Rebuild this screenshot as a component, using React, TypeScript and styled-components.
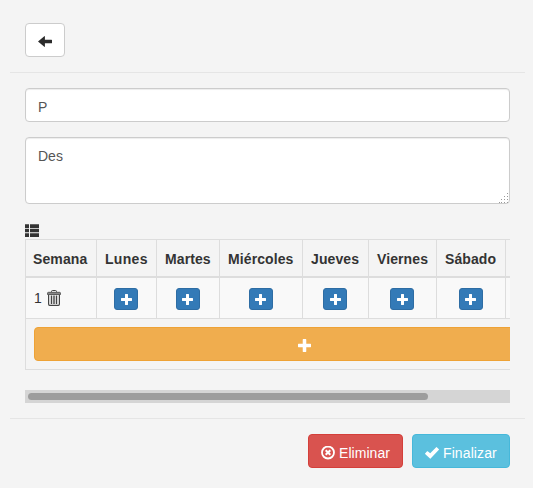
import React from "react";
import styled, { createGlobalStyle } from "styled-components";

const Global = createGlobalStyle`
  * { box-sizing: border-box; }
  html, body { margin: 0; background: #f4f4f4; overflow: hidden; }
  body { font: 14px/20px "Liberation Sans", Arial, sans-serif; color: #333; }
`;

const Page = styled.main`
  width: 533px;
  height: 488px;
  padding: 8px 8px 0 10px;
  overflow: hidden;
`;

const Header = styled.header`
  padding: 15px;
  height: 65px;
  border-bottom: 1px solid #e5e5e5;
`;

const Body = styled.section`
  height: 346px;
  padding: 15px;
  border-bottom: 1px solid #e5e5e5;
`;

const Footer = styled.footer`
  display: flex;
  justify-content: flex-end;
  gap: 9px;
  padding: 15px;
`;

const Icon = styled.svg`
  display: block;
  flex: none;
`;

const tones = {
  plain: ["#fff", "#ccc", "#333"],
  primary: ["#337ab7", "#2e6da4", "#fff"],
  warning: ["#f0ad4e", "#eea236", "#fff"],
  danger: ["#d9534f", "#d43f3a", "#fff"],
  info: ["#5bc0de", "#46b8da", "#fff"],
};

const Button = styled.button<{ $tone: keyof typeof tones; $width: number }>`
  display: flex;
  align-items: center;
  width: ${(p) => p.$width}px;
  height: 34px;
  padding: 3px 12px 0;
  font: inherit;
  border-radius: 4px;
  background: ${(p) => tones[p.$tone][0]};
  border: 1px solid ${(p) => tones[p.$tone][1]};
  color: ${(p) => tones[p.$tone][2]};
`;

const SmallButton = styled(Button)`
  height: 22px;
  margin: 0 auto;
  padding: 0;
  justify-content: center;
  border-radius: 3px;
`;

const WideButton = styled(Button)`
  justify-content: center;
  padding: 3px 0 0;
`;

const ButtonText = styled.span<{ $spacing: number }>`
  margin-left: 4px;
  white-space: nowrap;
  letter-spacing: ${(p) => p.$spacing}px;
`;

const Input = styled.input`
  display: block;
  width: 485px;
  height: 34px;
  padding: 9px 12px 5px;
  border: 1px solid #ccc;
  border-radius: 4px;
  background: #fff;
  box-shadow: inset 0 1px 1px rgba(0, 0, 0, 0.075);
  font: inherit;
  color: #555;
`;

const AreaWrap = styled.div`
  position: relative;
  margin-top: 15px;
`;

const Area = styled.textarea`
  display: block;
  width: 485px;
  height: 67px;
  padding: 8px 12px;
  border: 1px solid #ccc;
  border-radius: 4px;
  background: #fff;
  box-shadow: inset 0 1px 1px rgba(0, 0, 0, 0.075);
  font: inherit;
  color: #555;
  resize: none;
`;

const Grip = styled.svg`
  position: absolute;
  right: 1px;
  bottom: 1px;
`;

const ListMark = styled.div`
  height: 15px;
  margin-top: 20px;
`;

const Scroller = styled.div`
  width: 485px;
  height: 151px;
  overflow: hidden;
`;

const Table = styled.table`
  width: 560px;
  table-layout: fixed;
  border-spacing: 0;
  border-top: 1px solid #ddd;
  border-right: 1px solid #ddd;
`;

const Th = styled.th<{ $spacing: number }>`
  height: 38px;
  padding: 1px 0 0 8px;
  border-left: 1px solid #ddd;
  border-bottom: 2px solid #ddd;
  text-align: left;
  white-space: nowrap;
  letter-spacing: ${(p) => p.$spacing}px;

  &:first-child {
    padding-left: 7px;
  }
`;

const Td = styled.td`
  height: 41px;
  padding: 2px 1px 0 0;
  border-left: 1px solid #ddd;
  border-bottom: 1px solid #ddd;
  background: #f9f9f9;
`;

const AddCell = styled.td`
  height: 51px;
  padding: 8px;
  border-left: 1px solid #ddd;
  border-bottom: 1px solid #ddd;
`;

const Week = styled.div`
  display: flex;
  align-items: center;
  gap: 5px;
  padding: 0 0 2px 8px;
`;

const ScrollBar = styled.div`
  width: 485px;
  height: 13px;
  padding: 3px;
  background: #d5d5d5;
`;

const Thumb = styled.div`
  width: 400px;
  height: 7px;
  border-radius: 4px;
  background: #9d9d9d;
`;

const days = [
  { name: "Semana", width: 71, spacing: 0.12 },
  { name: "Lunes", width: 60, spacing: 0.3 },
  { name: "Martes", width: 63, spacing: 0.1 },
  { name: "Miércoles", width: 83, spacing: 0.1 },
  { name: "Jueves", width: 66, spacing: 0.1 },
  { name: "Viernes", width: 68, spacing: 0.1 },
  { name: "Sábado", width: 69, spacing: 0.1 },
  { name: "Domingo", width: 79, spacing: 0.1 },
];

const ArrowLeft = () => (
  <Icon width="14" height="12" viewBox="0 0 14 12">
    <path d="M0 5.5 6.3.2q.6-.4.6.3V3.8h6.6q.5 0 .5.5v2.4q0 .5-.5.5H6.9v3.3q0 .7-.6.3Z" fill="#2b2b2b" />
  </Icon>
);

const ListIcon = () => (
  <Icon width="14" height="13" viewBox="0 0 14 13" fill="#333">
    <path d="M0 .3h4V4H0ZM5 .3h9V4H5ZM0 4.8h4v3.5H0ZM5 4.8h9v3.5H5ZM0 9.3h4V13H0ZM5 9.3h9V13H5Z" />
  </Icon>
);

const Plus = ({ size }: { size: number }) => (
  <Icon width={size} height={size} viewBox="0 0 11 11" fill="#fff">
    <path d="M4 .4Q4 0 4.4 0h2.2Q7 0 7 .4V4h3.6q.4 0 .4.4v2.2q0 .4-.4.4H7v3.6q0 .4-.4.4H4.4q-.4 0-.4-.4V7H.4Q0 7 0 6.6V4.4Q0 4 .4 4H4Z" />
  </Icon>
);

const Trash = () => (
  <Icon width="14" height="16" viewBox="0 0 14 16" fill="none" stroke="#444">
    <path d="M4.5 2v-.5q0-1 1-1h3q1 0 1 1V2" />
    <path d="M.5 4.5V3.3q0-1 1-1h11q1 0 1 1v1.2Z" fill="#888" strokeWidth=".8" />
    <path d="M1.6 5v9q0 1.3 1 1.3h8.8q1 0 1-1.3V5" strokeWidth="1.2" />
    <path d="M4.5 5.5v8.5M7 5.5v8.5M9.5 5.5v8.5" strokeWidth="1.4" />
  </Icon>
);

const RemoveCircle = () => (
  <Icon width="14" height="14" viewBox="0 0 14 14" fill="none" stroke="#fff">
    <circle cx="7" cy="6.5" r="6" strokeWidth="1.8" />
    <path d="m4.7 4.2 4.6 4.6m0-4.6L4.7 8.8" strokeWidth="2" />
  </Icon>
);

const Check = () => (
  <Icon width="14" height="12" viewBox="0 0 14 12" fill="#fff">
    <path d="M.1 6.5 2.1 4.3q.3-.3.6 0l2.5 2L11.2.2q.3-.3.6 0l2.1 2q.3.3 0 .6l-8.3 8.8q-.3.4-.6 0L.1 7.1q-.3-.3 0-.6Z" />
  </Icon>
);

export default function App() {
  return (
    <>
      <Global />
      <Page>
        <Header>
          <Button $tone="plain" $width={40} aria-label="Volver"><ArrowLeft /></Button>
        </Header>
        <Body>
          <Input defaultValue="P" />
          <AreaWrap>
            <Area defaultValue="Des" />
            <Grip width="10" height="10" viewBox="0 0 10 10" fill="#999">
              <path d="M8 0h1v1H8zM5 3h1v1H5zM8 3h1v1H8zM2 6h1v1H2zM5 6h1v1H5zM8 6h1v1H8zM0 9h1v1H0zM2 9h1v1H2zM5 9h1v1H5zM8 9h1v1H8z" />
            </Grip>
          </AreaWrap>
          <ListMark><ListIcon /></ListMark>
          <Scroller>
            <Table>
              <colgroup>
                {days.map((d) => <col key={d.name} width={d.width} />)}
              </colgroup>
              <thead>
                <tr>{days.map((d) => <Th key={d.name} $spacing={d.spacing}>{d.name}</Th>)}</tr>
              </thead>
              <tbody>
                <tr>
                  <Td><Week>1 <Trash /></Week></Td>
                  {days.slice(1).map((d) => (
                    <Td key={d.name}>
                      <SmallButton $tone="primary" $width={24}><Plus size={11} /></SmallButton>
                    </Td>
                  ))}
                </tr>
                <tr>
                  <AddCell colSpan={8}>
                    <WideButton $tone="warning" $width={541}><Plus size={13} /></WideButton>
                  </AddCell>
                </tr>
              </tbody>
            </Table>
          </Scroller>
          <ScrollBar><Thumb /></ScrollBar>
        </Body>
        <Footer>
          <Button $tone="danger" $width={95}><RemoveCircle /><ButtonText $spacing={0.05}>Eliminar</ButtonText></Button>
          <Button $tone="info" $width={98}><Check /><ButtonText $spacing={0.1}>Finalizar</ButtonText></Button>
        </Footer>
      </Page>
    </>
  );
}
